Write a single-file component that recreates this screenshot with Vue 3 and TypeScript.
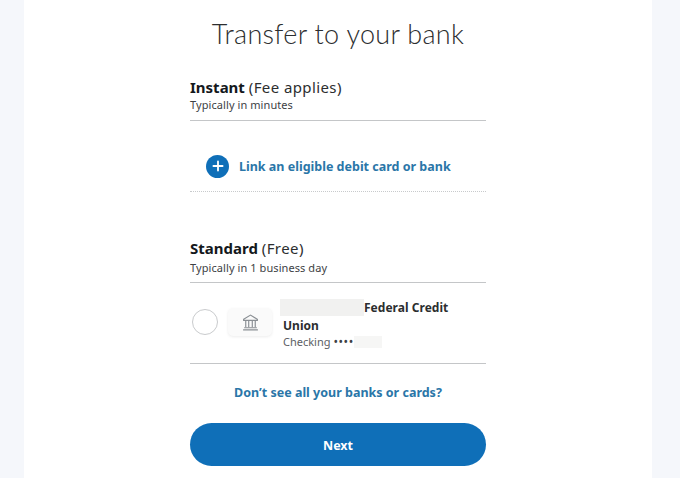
<script setup lang="ts">
const title = 'Transfer to your bank'
</script>

<template>
  <div class="page">
    <main class="panel">
      <h1 class="title">{{ title }}</h1>
      <div class="column">
        <section class="instant">
          <div class="head"><b>Instant</b> <span class="note">(Fee applies)</span></div>
          <div class="sub">Typically in minutes</div>
        </section>
        <a class="link-row">
          <span class="plus">
            <svg viewBox="0 0 24 24" width="24" height="24"><path d="M12 6.5v11M6.5 12h11" stroke="#fff" stroke-width="2.2" stroke-linecap="round" fill="none"/></svg>
          </span>
          <span class="link-text">Link an eligible debit card or bank</span>
        </a>
        <section class="standard">
          <div class="head"><b>Standard</b> <span class="note">(Free)</span></div>
          <div class="sub">Typically in 1 business day</div>
        </section>
        <div class="account">
          <span class="radio"></span>
          <span class="bank-tile">
            <svg viewBox="0 0 18 18" width="19" height="19" fill="none" stroke="#8a8f94" stroke-width="1.1">
              <path d="M2.5 6 9 2l6.5 4v1h-13z"/>
              <path d="M4.5 7.5v6M7.3 7.5v6M10.7 7.5v6M13.5 7.5v6"/>
              <path d="M3 14h12M2 16h14"/>
            </svg>
          </span>
          <div class="bank-info">
            <div class="bank-name"><span class="mask mask-name"></span>Federal Credit Union</div>
            <div class="bank-acct">Checking <span class="dots">••••</span><span class="mask mask-num"></span></div>
          </div>
        </div>
        <a class="see-all">Don’t see all your banks or cards?</a>
        <button class="next" type="button">Next</button>
      </div>
    </main>
  </div>
</template>

<style>
html, body { margin: 0; background: #f5f7fb; }
</style>

<style scoped>
.page {
  height: 478px;
  overflow: hidden;
  background: #f5f7fb;
  font-family: "Noto Sans", "Open Sans", sans-serif;
}
.panel {
  width: 628px;
  height: 478px;
  margin-left: 24px;
  background: #fff;
  display: flex;
  flex-direction: column;
  align-items: center;
}
.title {
  margin: 12px 0 0;
  height: 44px;
  font-family: Lato, sans-serif;
  font-weight: 300;
  font-size: 27px;
  line-height: 44px;
  letter-spacing: 0.3px;
  color: #2c2e2f;
}
.column {
  width: 296px;
  display: flex;
  flex-direction: column;
}
.instant {
  margin-top: 21px;
  height: 43px;
  border-bottom: 1px solid #c4c6c8;
}
.head {
  font-size: 15px;
  line-height: 20px;
  color: #2c2e2f;
}
.head b { font-weight: 700; color: #14181c; }
.note { letter-spacing: 0.4px; }
.sub {
  font-size: 11px;
  line-height: 16px;
  letter-spacing: 0.08px;
  color: #3d4144;
}
.link-row {
  height: 50px;
  padding-top: 20px;
  display: flex;
  align-items: center;
  gap: 10px;
  padding-left: 16px;
  border-bottom: 1px dotted #c8cacc;
}
.plus {
  width: 23px;
  height: 23px;
  border-radius: 50%;
  background: #0f6fb8;
  display: flex;
  align-items: center;
  justify-content: center;
}
.plus svg { width: 20px; height: 20px; }
.link-text {
  font-size: 12.5px;
  font-weight: 700;
  color: #2a76a8;
}
.standard {
  margin-top: 46px;
  height: 44px;
  border-bottom: 1px solid #c4c6c8;
}
.standard .head { margin-bottom: 2px; }
.account {
  height: 81px;
  display: flex;
  align-items: flex-start;
  border-bottom: 1px solid #c4c6c8;
  box-sizing: border-box;
  padding: 26px 0 0 2px;
}
.radio {
  width: 24px;
  height: 24px;
  border: 1px solid #c9cbcd;
  border-radius: 50%;
  flex: none;
}
.bank-tile {
  margin: -1px 0 0 10px;
  width: 44px;
  height: 28px;
  background: #fafafa;
  border-radius: 5px;
  box-shadow: 0 1px 3px rgba(0, 0, 0, 0.08);
  display: flex;
  align-items: center;
  justify-content: center;
  flex: none;
}
.bank-info {
  margin: -10px 0 0 11px;
  width: 180px;
}
.bank-name {
  font-size: 12px;
  font-weight: 700;
  line-height: 18px;
  letter-spacing: 0.03px;
  color: #2c2e2f;
}
.mask {
  display: inline-block;
  background: #f1f1f0;
}
.mask-name {
  width: 84px;
  height: 17px;
  margin-left: -3px;
  vertical-align: -4px;
}
.bank-acct {
  margin-top: -1px;
  font-size: 11px;
  line-height: 15px;
  color: #5c6064;
}
.dots {
  font-size: 12px;
  letter-spacing: 0.6px;
  color: #3d4144;
}
.mask-num {
  width: 28px;
  height: 12px;
  vertical-align: -2px;
  background: #f6f6f5;
}
.see-all {
  margin-top: 20px;
  text-align: center;
  font-size: 12.5px;
  line-height: 18px;
  font-weight: 700;
  color: #2a76a8;
}
.next {
  margin-top: 21px;
  height: 43px;
  padding: 1px 0 0;
  border: none;
  border-radius: 22px;
  background: #0f6fb8;
  color: #fff;
  font: 700 12.5px "Noto Sans", sans-serif;
}
</style>
